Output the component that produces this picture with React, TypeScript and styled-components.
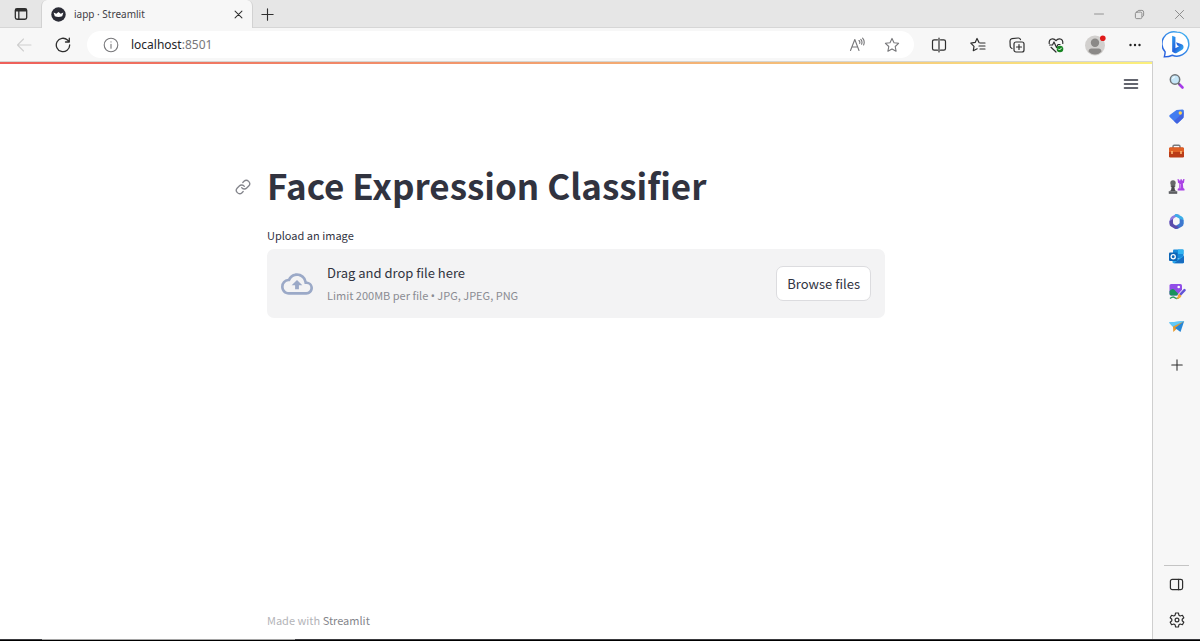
import React from "react";
import styled, { createGlobalStyle } from "styled-components";

const GlobalStyle = createGlobalStyle`
  *, *::before, *::after { box-sizing: border-box; }
  body { margin: 0; background: #fff; }
  button, input { font: inherit; color: inherit; }
  h1, p { margin: 0; }
  svg { display: block; flex: none; }
`;

const chromeFont = `"Noto Sans", "Open Sans", sans-serif`;
const pageFont = `"Noto Sans CJK SC", "Noto Sans", sans-serif`;

const Window = styled.div`
  display: flex;
  flex-direction: column;
  min-height: 100vh;
  background: #f7f7f7;
  color: #31333f;
  font-family: ${chromeFont};
`;

const TitleBar = styled.header`
  display: flex;
  height: 28px;
  padding-right: 1px;
  background: #e6e6e6;
  box-shadow: inset 0 -1px #d6d6d6;
`;

const IconButton = styled.button<{ $width?: number; $height?: number; $color?: string }>`
  display: flex;
  align-items: center;
  justify-content: center;
  flex: none;
  width: ${(p) => p.$width ?? 39}px;
  height: ${(p) => p.$height ?? 28}px;
  padding: 0;
  border: 0;
  background: transparent;
  color: ${(p) => p.$color ?? "#2f2f2f"};
`;

const Tab = styled.div`
  display: flex;
  align-items: center;
  gap: 8px;
  width: 212px;
  padding-left: 9px;
  background: #f7f7f7;
  border: 1px solid #d2d2d2;
  border-width: 0 1px;
  border-radius: 6px 6px 0 0;
  font-size: 10px;
  color: #3f4045;
`;

const TabTitle = styled.span`
  flex: 1;
`;

const Spacer = styled.div`
  flex: 1;
`;

const Toolbar = styled.div`
  display: flex;
  align-items: center;
  height: 33px;
  padding: 0 4px;
`;

const AddressBar = styled.form`
  display: flex;
  align-items: center;
  flex: 1;
  height: 27px;
  margin: 0 5px;
  padding: 0 5px 0 4px;
  border-radius: 14px;
  background: #fff;
`;

const AddressLabel = styled.label`
  position: relative;
  flex: 1;
  display: flex;
  align-items: center;
  height: 27px;
  font-size: 12px;
  color: #77777a;
`;

const AddressHost = styled.span`
  color: #242428;
`;

const AddressInput = styled.input`
  position: absolute;
  inset: 0;
  width: 100%;
  border: 0;
  padding: 0;
  background: transparent;
  opacity: 0;
`;

const Body = styled.div`
  display: flex;
  flex: 1;
`;

const Page = styled.main`
  display: flex;
  flex-direction: column;
  flex: 1;
  background: #fff;
  border-top: 1px solid #d4d6d4;
  border-right: 1px solid #cfcfcf;
  font-family: ${pageFont};
`;

const Decoration = styled.div`
  height: 2px;
  background: linear-gradient(90deg, #ee5f5a, #f5c77c 75%, #fbf07c);
`;

const PageHeader = styled.div`
  display: flex;
  justify-content: flex-end;
  padding: 6px 6px 0 0;
`;

const Content = styled.div`
  display: flex;
  flex-direction: column;
  flex: 1;
  width: 100%;
  max-width: 618px;
  margin: 0 auto;
  padding-top: 63px;
`;

const Heading = styled.div`
  display: flex;
  align-items: center;
  height: 52px;
  margin-left: -32px;
`;

const Anchor = styled.a`
  width: 32px;
  color: #84858c;
`;

const Title = styled.h1`
  padding-bottom: 4px;
  font-size: 35px;
  line-height: 52px;
  font-weight: 700;
  white-space: nowrap;
`;

const UploadLabel = styled.label`
  margin-top: 12px;
  height: 24px;
  font-size: 11px;
  line-height: 20px;
`;

const DropZone = styled.section`
  display: flex;
  align-items: center;
  gap: 14px;
  height: 69px;
  padding: 0 14px;
  border-radius: 7px;
  background: #f3f3f4;
`;

const DropText = styled.div`
  flex: 1;
  padding-top: 2px;
`;

const DropTitle = styled.p`
  font-size: 13px;
  line-height: 22px;
`;

const DropHint = styled.p`
  font-size: 11px;
  line-height: 22px;
  color: #8a8b92;
`;

const Bullet = styled.span`
  font-family: "Noto Sans", sans-serif;
`;

const HiddenFile = styled.input`
  display: none;
`;

const BrowseButton = styled.button`
  height: 35px;
  padding: 0 10px;
  border: 1px solid #dcdcdf;
  border-radius: 7px;
  background: #fff;
  font-size: 13px;
  white-space: nowrap;
`;

const Footer = styled.footer`
  margin-top: auto;
  height: 29px;
  font-size: 11px;
  line-height: 20px;
  color: #b3b4b8;
`;

const FooterLink = styled.a`
  color: #85868c;
  text-decoration: none;
`;

const Sidebar = styled.aside`
  display: flex;
  flex-direction: column;
  width: 47px;
  padding: 3px 0 1px;
`;

const Divider = styled.hr`
  width: 25px;
  margin: 0 auto;
  border: 0;
  border-top: 1px solid #c4c4c4;
`;

const Taskbar = styled.div`
  display: flex;
  height: 2px;
  border-bottom: 1px solid #000;
  background: #3a3a3e;
`;

const TaskbarHighlight = styled.div`
  width: 253px;
  margin-left: 42px;
  background: #a5a5a5;
`;

type LineIconProps = { size?: number; width?: number; children: React.ReactNode };

const LineIcon = ({ size = 16, width = 1.1, children }: LineIconProps) => (
  <svg
    width={size}
    height={size}
    viewBox="0 0 16 16"
    fill="none"
    stroke="currentColor"
    strokeWidth={width}
    strokeLinecap="round"
    strokeLinejoin="round"
    aria-hidden="true"
  >
    {children}
  </svg>
);

const starPath = "M8 1.4l2 4.3 4.6.6-3.4 3.2.9 4.7L8 11.9l-4.1 2.3.9-4.7L1.4 6.3 6 5.7z";
const plusPath = "M8 2v12M2 8h12";

const BingIcon = () => (
  <svg width="29" height="29" viewBox="0 0 30 30" aria-hidden="true">
    <defs>
      <linearGradient id="bubble" x1="1" y1="0" x2="0" y2="1">
        <stop offset="0" stopColor="#45b8f2" />
        <stop offset="1" stopColor="#2456dc" />
      </linearGradient>
      <linearGradient id="bee" x1="0" y1="0" x2="1" y2="1">
        <stop offset="0" stopColor="#2f9df0" />
        <stop offset="0.5" stopColor="#2462dc" />
        <stop offset="1" stopColor="#36c2f4" />
      </linearGradient>
    </defs>
    <path
      d="M15.5 2.2a12.4 12.4 0 1 1-4.8 23.9c-2.4 1.2-5.2 1.7-8.3 1.7 .6-2 .9-3.400 .8-5.200A12.400 12.400 0 0 1 15.500 2.200z"
      fill="#fff"
      stroke="url(#bubble)"
      strokeWidth="1.500"
    />
    <path
      d="M10.500 6l3.400 1.200v11.600l3.700-2.100-1.900-.9-1.200-3.100 5.900 2.100c1.300.5 1.900 1.600 1.900 2.900 0 1.400-.7 2.400-1.900 3.100l-5.300 3c-.8.5-1.600.5-2.300 0l-2.300-1.400z"
      fill="url(#bee)"
    />
  </svg>
);

const SearchIcon = () => (
  <svg width="16" height="16" viewBox="0 0 16 16" aria-hidden="true">
    <path d="M10.500 10.500l3 3" stroke="#a63be8" strokeWidth="2.600" strokeLinecap="round" />
    <path d="M9 9l1.600 1.600" stroke="#666" strokeWidth="1.500" />
    <circle cx="6" cy="5.500" r="4.700" fill="#c6e7f8" stroke="#707579" strokeWidth="1.500" />
    <path d="M3.500 5A3 3 0 0 1 6 2.800" stroke="#fff" fill="none" />
  </svg>
);

const ShoppingIcon = () => (
  <svg width="17" height="17" viewBox="0 0 17 17" aria-hidden="true">
    <path d="M8.500 2l6-.5q1.500 0 1.400 1.500l-.3 6q0 .7-.6 1.300l-5 4.800q-1 1-2 0L1.700 9q-1-1 0-2z" fill="#427cf0" />
    <path d="M15.800 4l-.2 5q0 .7-.6 1.300l-5 4.800q-1 1-2 0l-2-2z" fill="#4259d8" opacity=".7" />
    <circle cx="12.300" cy="5" r="1.700" fill="#ffd152" />
  </svg>
);

const ToolsIcon = () => (
  <svg width="17" height="17" viewBox="0 0 17 17" aria-hidden="true">
    <path d="M5 5V3.500Q5 2.300 6.200 2.300h4.600q1.200 0 1.200 1.200V5" fill="none" stroke="#77797d" strokeWidth="1.400" />
    <rect x="1" y="4.500" width="15" height="10" rx="1.300" fill="#ba3c18" />
    <path d="M1 6q0-1.500 1.300-1.500h12.400Q16 4.500 16 6v3H1z" fill="#df6025" />
    <path d="M4 8v3M13 8v3" stroke="#ffc17c" strokeWidth="1.500" />
  </svg>
);

const GamesIcon = () => (
  <svg width="17" height="17" viewBox="0 0 17 17" aria-hidden="true">
    <path d="M9.500 1l1.600.4.200 1.200 1-.1.200-1.200h1.300l.2 1.200 1-.1.200-1.300L16.500 1l-.5 3.800-1.200.8.500 4.400 1.200 1v1.500H9.700V11l1.200-1 .4-4.400-1.300-.8z" fill="#aa43e5" />
    <path d="M12.300 6l-.3 4.500" stroke="#dba0f8" />
    <circle cx="5" cy="5" r="2.700" fill="#65676a" />
    <path d="M2.700 7.200h4.600v1.300l-.9.500.6 3.200 2.200 1.200v2.300H.8v-2.300L3 12.200 3.600 9l-.9-.5z" fill="#4b4c50" />
    <path d="M.8 13.800h8.400" stroke="#8a8c90" />
  </svg>
);

const OfficeIcon = () => (
  <svg width="17" height="17" viewBox="0 0 17 17" aria-hidden="true">
    <path d="M8.500 1L4 3.300Q1.500 5 1.500 8v2.500L5 12V7q0-1.500 1.500-2.300L12 2z" fill="#8f7be0" />
    <path d="M7 1.300q1.500-.6 3 .1l3.800 2Q15.500 4.500 15.500 6v5l-3.700-1.800V7q0-1.200-1-1.800L6.500 3z" fill="#3caee8" />
    <path d="M15.500 7v4q0 1.500-1.500 2.500l-4 2.200q-1.500.8-3 0L5.500 14l5.300-3q1-.6 1-2V6z" fill="#3f78cf" />
    <path d="M1.500 8v3q0 1.500 1.500 2.500l3.500 2q1.500.7 3-.2l1.500-1L6 11.500Q5 10.800 5 9.500V6z" fill="#5a4cab" />
  </svg>
);

const OutlookIcon = () => (
  <svg width="17" height="17" viewBox="0 0 17 17" aria-hidden="true">
    <rect x="5" y="1.500" width="10.500" height="9" rx="1" fill="#1789da" />
    <path d="M10 1.500h5.500V6H10z" fill="#31b4f1" />
    <path d="M4.500 7.500L10 11l6-3.500V14q0 1.200-1.200 1.200H5.700q-1.200 0-1.200-1.200z" fill="#28a7ec" />
    <path d="M16 8v6q0 1.200-1.200 1.200H6z" fill="#176cc0" />
    <rect x="1" y="4.500" width="8.500" height="8.500" rx="1" fill="#0c65b6" />
    <circle cx="5.200" cy="8.700" r="2.100" fill="none" stroke="#fff" strokeWidth="1.300" />
  </svg>
);

const DesignerIcon = () => (
  <svg width="18" height="18" viewBox="0 0 18 18" aria-hidden="true">
    <rect x="1.500" y="1" width="12.500" height="11.500" rx="1.600" fill="#914ee8" />
    <circle cx="10.700" cy="4" r="1.300" fill="#fff" />
    <path d="M1.500 10.500V8q3.500-4 6 0l3 3-2 1.500H3.200q-1.700 0-1.700-2z" fill="#18935b" />
    <path d="M2 15.500q3-2.500 4.500-1t4 .5" fill="none" stroke="#2a9a60" strokeWidth="1.500" />
    <path d="M16.500 7.200l-4.700 5" stroke="#f7f7f7" strokeWidth="4" strokeLinecap="round" />
    <path d="M16.500 7.200l-4.700 5" stroke="#6254d6" strokeWidth="2.500" strokeLinecap="round" />
    <path d="M11.300 10.800l2.200 2.200q-1.700 3.600-5.300 2.600 2-1 1.700-3z" fill="#f5a937" />
  </svg>
);

const DropIcon = () => (
  <svg width="17" height="17" viewBox="0 0 17 17" aria-hidden="true">
    <path d="M1 4.500L16.200 3 6 10z" fill="#38aff0" />
    <path d="M16.200 3L5 8.500l.3 5.500L8 11.500z" fill="#e79a2c" />
    <path d="M16.200 3L7 10l5.500 4z" fill="#2587d8" />
    <path d="M1 4.500L16.200 3 5 8.500z" fill="#62c9f6" />
  </svg>
);

const sidebarApps: { label: string; icon: React.ReactNode }[] = [
  { label: "Search", icon: <SearchIcon /> },
  { label: "Shopping", icon: <ShoppingIcon /> },
  { label: "Tools", icon: <ToolsIcon /> },
  { label: "Games", icon: <GamesIcon /> },
  { label: "Microsoft 365", icon: <OfficeIcon /> },
  { label: "Outlook", icon: <OutlookIcon /> },
  { label: "Image creator", icon: <DesignerIcon /> },
  { label: "Drop", icon: <DropIcon /> },
];

const BrowserTitleBar = () => (
  <TitleBar>
    <IconButton $width={41} aria-label="Tab actions">
      <LineIcon size={14} width={1.5}>
        <rect x="1.500" y="2" width="13" height="12" rx="2" />
        <path d="M2.500 3.500h11" strokeWidth="3" />
        <path d="M5.500 5v9" />
      </LineIcon>
    </IconButton>
    <Tab>
      <svg width="15" height="15" viewBox="0 0 15 15" aria-hidden="true">
        <circle cx="7.500" cy="7.500" r="7.200" fill="#2b2c36" />
        <path d="M2.600 5.500l2.700 1.300L7.500 5l2.200 1.800 2.700-1.300-1.200 3.800q-3.700 1.400-7.400 0z" fill="#fff" />
      </svg>
      <TabTitle>iapp · Streamlit</TabTitle>
      <IconButton $width={28} aria-label="Close tab">
        <LineIcon size={11} width={1.5}>
          <path d="M3 3l10 10M13 3L3 13" />
        </LineIcon>
      </IconButton>
    </Tab>
    <IconButton $width={28} aria-label="New tab">
      <LineIcon size={15} width={1.2}>
        <path d={plusPath} />
      </LineIcon>
    </IconButton>
    <Spacer />
    <IconButton $width={40} $color="#8a8a8a" aria-label="Minimize">
      <LineIcon size={12} width={1.2}>
        <path d="M2 8h12" />
      </LineIcon>
    </IconButton>
    <IconButton $width={40} $color="#8a8a8a" aria-label="Restore">
      <LineIcon size={11} width={1.4}>
        <rect x="2" y="4.500" width="9.500" height="9.500" rx="2" />
        <path d="M5 4V3.500Q5.500 2 7 2h4.500q2.500 0 2.500 2.500V9q0 1.500-1.500 2" />
      </LineIcon>
    </IconButton>
    <IconButton $width={40} $color="#8a8a8a" aria-label="Close window">
      <LineIcon size={13} width={1.2}>
        <path d="M3 3l10 10M13 3L3 13" />
      </LineIcon>
    </IconButton>
  </TitleBar>
);

const BrowserToolbar = () => (
  <Toolbar>
    <IconButton $color="#cfcfcf" aria-label="Back">
      <LineIcon>
        <path d="M15 8H1.500M7.500 2L1.500 8l6 6" />
      </LineIcon>
    </IconButton>
    <IconButton aria-label="Refresh">
      <LineIcon width={1.3}>
        <path d="M14.700 8A6.700 6.700 0 1 1 12.500 3l1.700 1.800M14.300 1.200V5h-3.800" />
      </LineIcon>
    </IconButton>
    <AddressBar>
      <IconButton $width={40} $color="#77777a" type="button" aria-label="Site information">
        <LineIcon>
          <circle cx="8" cy="8" r="6.800" />
          <path d="M8 7.200v4M8 4.700v.2" />
        </LineIcon>
      </IconButton>
      <AddressLabel>
        <AddressHost>localhost</AddressHost>:8501
        <AddressInput aria-label="Address" defaultValue="localhost:8501" />
      </AddressLabel>
      <IconButton $width={35} $color="#77777a" type="button" aria-label="Read aloud">
        <LineIcon>
          <path d="M1.500 13.500L5.800 2.500 10 13.500M3 10h5.600M10 3.500q1.300 1.300.7 2.900M11.800 2.300q1.900 2.200.8 5M13.600 1.200q2.600 3 1 6.800" />
        </LineIcon>
      </IconButton>
      <IconButton $width={35} $color="#77777a" type="button" aria-label="Add to favorites">
        <LineIcon>
          <path d={starPath} />
        </LineIcon>
      </IconButton>
    </AddressBar>
    <IconButton aria-label="Split screen">
      <LineIcon width={1.2}>
        <path d="M6.500 2.800H3.200q-1.700 0-1.700 1.700v7q0 1.700 1.700 1.700h3.300M9.500 2.800h3.300q1.700 0 1.700 1.700v7q0 1.700-1.700 1.700H9.500M8 1v14" />
      </LineIcon>
    </IconButton>
    <IconButton aria-label="Favorites">
      <LineIcon width={1.2}>
        <path d="M9 5.500L7 1.500 5.200 5.400l-4.400.7L4 9.300l-.7 4.400L7.200 11.800M10 6h5M9 9h6M10 12h5" />
      </LineIcon>
    </IconButton>
    <IconButton aria-label="Collections">
      <LineIcon width={1.2}>
        <rect x="5" y="5" width="10" height="10" rx="2" />
        <path d="M10 7.500v5M7.500 10h5M3 11.500Q1 10.500 1.200 9L1 4q0-2 2-2.300L9 1q2-.2 2.500 1.700" />
      </LineIcon>
    </IconButton>
    <IconButton aria-label="Browser essentials">
      <LineIcon width={1.2}>
        <path d="M1.200 6.500Q.8 2 4.500 1.800 6.500 1.700 8 3.700q1.500-2 3.500-1.900Q15.200 2 14.800 6.500M1.500 8h3l1.500-3 2.500 5.500L10 7.500h2M3 10.300L8 15" />
        <circle cx="12" cy="12" r="3.300" fill="#178522" stroke="none" />
        <path d="M10.500 12l1 1 2-2" stroke="#fff" strokeWidth="1" />
      </LineIcon>
    </IconButton>
    <IconButton aria-label="Profile">
      <svg width="22" height="22" viewBox="0 0 22 22" aria-hidden="true">
        <circle cx="11" cy="11.500" r="10" fill="#d2d0ce" />
        <circle cx="11" cy="8.700" r="4.200" fill="#8b8987" />
        <path d="M4.500 17.500q.2-3 3-3h7q2.800 0 3 3Q15 20.500 11 20.500t-6.500-3z" fill="#8b8987" />
        <circle cx="18.800" cy="4.200" r="2.800" fill="#e01b1b" />
      </svg>
    </IconButton>
    <IconButton $width={42} aria-label="Settings and more">
      <svg width="14" height="4" viewBox="0 0 14 4" fill="#222" aria-hidden="true">
        <circle cx="2.500" cy="2" r="1.200" />
        <circle cx="7" cy="2" r="1.200" />
        <circle cx="11.500" cy="2" r="1.200" />
      </svg>
    </IconButton>
    <IconButton $width={40} $height={30} aria-label="Bing chat">
      <BingIcon />
    </IconButton>
  </Toolbar>
);

const BrowserSidebar = () => (
  <Sidebar>
    {sidebarApps.map((app) => (
      <IconButton key={app.label} $width={47} $height={35} aria-label={app.label}>
        {app.icon}
      </IconButton>
    ))}
    <IconButton $width={47} $height={42} aria-label="Customize sidebar">
      <LineIcon size={14} width={1.2}>
        <path d={plusPath} />
      </LineIcon>
    </IconButton>
    <Spacer />
    <Divider />
    <IconButton $width={47} $height={36} aria-label="Hide sidebar">
      <LineIcon size={15} width={1.3}>
        <rect x="1.500" y="2.500" width="13" height="11" rx="2" />
        <path d="M10.200 2.500v11" />
      </LineIcon>
    </IconButton>
    <IconButton $width={47} $height={36} aria-label="Settings">
      <LineIcon width={1.2}>
        <path d="M6.600 1h2.800l.5 2.200 1.300.8 2.200-.7 1.400 2.500L13.200 7.300v1.400l1.600 1.500-1.400 2.500-2.200-.7-1.300.8-.5 2.200H6.600l-.5-2.200L4.800 12l-2.200.7-1.400-2.500 1.600-1.500V7.300L1.200 5.800l1.400-2.500 2.200.7 1.300-.8z" />
        <circle cx="8" cy="8" r="1.900" />
      </LineIcon>
    </IconButton>
  </Sidebar>
);

export default function App() {
  const fileInput = React.useRef<HTMLInputElement>(null);
  return (
    <Window>
      <GlobalStyle />
      <BrowserTitleBar />
      <BrowserToolbar />
      <Body>
        <Page>
          <Decoration />
          <PageHeader>
            <IconButton $width={30} $color="#31333f" aria-label="Main menu">
              <LineIcon width={1.6}>
                <path d="M1.500 4h13M1.500 8h13M1.500 12h13" />
              </LineIcon>
            </IconButton>
          </PageHeader>
          <Content>
            <Heading id="face-expression-classifier">
              <Anchor href="#face-expression-classifier" aria-label="Link to heading">
                <svg
                  width="16"
                  height="16"
                  viewBox="0 0 24 24"
                  fill="none"
                  stroke="currentColor"
                  strokeWidth="2"
                  strokeLinecap="round"
                  strokeLinejoin="round"
                  aria-hidden="true"
                >
                  <path d="M10 13a5 5 0 0 0 7.540.540l3-3a5 5 0 0 0-7.070-7.070l-1.720 1.710" />
                  <path d="M14 11a5 5 0 0 0-7.540-.540l-3 3a5 5 0 0 0 7.070 7.070l1.710-1.710" />
                </svg>
              </Anchor>
              <Title>Face Expression Classifier</Title>
            </Heading>
            <UploadLabel htmlFor="image-upload">Upload an image</UploadLabel>
            <DropZone>
              <svg width="32" height="32" viewBox="0 0 24 24" fill="#9ba9c7" aria-hidden="true">
                <path d="M19.350 10.040A7.490 7.490 0 0 0 12 4C9.110 4 6.600 5.640 5.350 8.040A5.994 5.994 0 0 0 0 14c0 3.310 2.690 6 6 6h13c2.760 0 5-2.240 5-5 0-2.640-2.050-4.780-4.650-4.960zM19 18H6c-2.210 0-4-1.790-4-4 0-2.050 1.530-3.760 3.560-3.970l1.070-.110.500-.950A5.469 5.469 0 0 1 12 6c2.620 0 4.880 1.860 5.390 4.430l.3 1.500 1.530.110A2.980 2.980 0 0 1 22 15c0 1.650-1.350 3-3 3zM8 13h2.550v3h2.900v-3H16l-4-4z" />
              </svg>
              <DropText>
                <DropTitle>Drag and drop file here</DropTitle>
                <DropHint>
                  Limit 200MB per file <Bullet>•</Bullet> JPG, JPEG, PNG
                </DropHint>
              </DropText>
              <HiddenFile ref={fileInput} id="image-upload" type="file" accept=".jpg,.jpeg,.png" />
              <BrowseButton type="button" onClick={() => fileInput.current?.click()}>
                Browse files
              </BrowseButton>
            </DropZone>
            <Footer>
              Made with <FooterLink href="#streamlit">Streamlit</FooterLink>
            </Footer>
          </Content>
        </Page>
        <BrowserSidebar />
      </Body>
      <Taskbar>
        <TaskbarHighlight />
      </Taskbar>
    </Window>
  );
}
